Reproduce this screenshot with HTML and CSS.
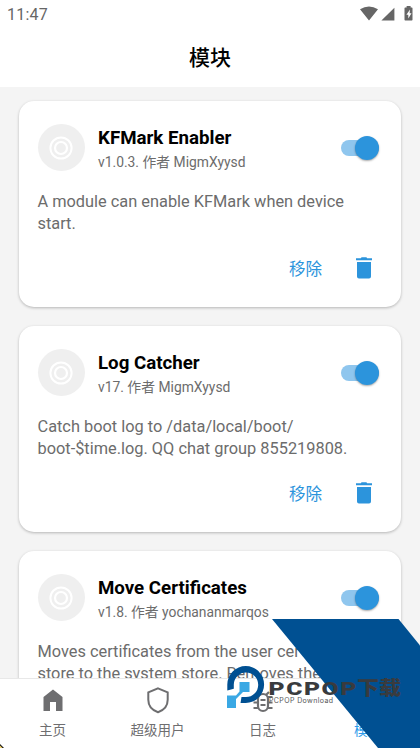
FILE: index.html
```html
<!DOCTYPE html>
<html lang="zh-CN">
<head>
<meta charset="utf-8">
<meta name="viewport" content="width=device-width">
<title>模块</title>
<link rel="stylesheet" href="styles.css">
</head>
<body>
<svg class="defs" width="0" height="0" aria-hidden="true">
  <symbol id="disc" viewBox="0 0 24 24"><g fill="none" stroke="currentColor"><circle cx="12" cy="12" r="10.600" stroke-width="2"/><circle cx="12" cy="12" r="6" stroke-width="2.200"/></g></symbol>
  <symbol id="trash" viewBox="0 0 16 22"><path d="M0 1.2h4.8L5.6.3h4.8l.8.9H16v2H0zM1 5h14v14.5a2 2 0 0 1-2 2H3a2 2 0 0 1-2-2z" fill="currentColor"/></symbol>
</svg>
<div class="screen">
  <header class="status">
    <span>11:47</span>
    <svg width="54" height="16" viewBox="0 0 54 16" fill="#666"><path d="M0 3.200Q9-2.200 18 3.200L9 14.500zM34.400 1.800v12.700H21.400zM46.600 1.500V0h4v1.500h1.200q.7 0 .7.7v11.600q0 .7-.7.7h-6.600q-.7 0-.7-.7V2.200q0-.7.7-.7z"/><path d="M50 3.500l-3.600 5.200h1.900v3.800l3.200-5.200h-1.900z" fill="#fff"/></svg>
  </header>
  <h1 class="title">模块</h1>
  <main class="list">
    <article class="card">
      <div class="head">
        <div class="avatar"><svg width="24" height="24"><use href="#disc"/></svg></div>
        <div class="info"><h2>KFMark Enabler</h2><p class="meta">v1.0.3. 作者 MigmXyysd</p></div>
        <div class="switch"></div>
      </div>
      <p class="desc">A module can enable KFMark when device<br>start.</p>
      <div class="actions"><span>移除</span><svg width="16" height="22"><use href="#trash"/></svg></div>
    </article>
    <article class="card">
      <div class="head">
        <div class="avatar"><svg width="24" height="24"><use href="#disc"/></svg></div>
        <div class="info"><h2>Log Catcher</h2><p class="meta">v17. 作者 MigmXyysd</p></div>
        <div class="switch"></div>
      </div>
      <p class="desc">Catch boot log to /data/local/boot/<br>boot-$time.log. QQ chat group 855219808.</p>
      <div class="actions"><span>移除</span><svg width="16" height="22"><use href="#trash"/></svg></div>
    </article>
    <article class="card">
      <div class="head">
        <div class="avatar"><svg width="24" height="24"><use href="#disc"/></svg></div>
        <div class="info"><h2>Move Certificates</h2><p class="meta">v1.8. 作者 yochananmarqos</p></div>
        <div class="switch"></div>
      </div>
      <p class="desc">Moves certificates from the user cer<br>store to the system store. Removes the</p>
    </article>
  </main>
  <nav class="tabs">
    <div class="tab"><svg width="26" height="28" viewBox="0 0 26 28"><path d="M3.500 10L13 2.500 22.500 10v14H16v-9h-6v9H3.500z" fill="currentColor"/></svg><span>主页</span></div>
    <div class="tab"><svg width="26" height="28" viewBox="0 0 26 28"><path d="M13 1.300l9.700 4v7.500c0 6-4 10.500-9.700 12.400C7.300 23.300 3.300 18.800 3.300 12.800V5.300z" fill="none" stroke="currentColor" stroke-width="2"/></svg><span>超级用户</span></div>
    <div class="tab"><svg width="26" height="28" viewBox="0 0 26 28" fill="none" stroke="currentColor" stroke-width="2.200"><path d="M8 12a5 5 0 0 1 10 0v7a5 5 0 0 1-10 0zM10.500 13h5M10.500 18h5M8 10H3.500M18 10h4.500M8 15.500H3.500M18 15.500h4.500M8 21H3.500M18 21h4.500M10 8L7 5M16 8l3-3"/></svg><span>日志</span></div>
    <div class="tab active"><svg width="26" height="28"></svg><span>模块</span></div>
  </nav>
  <svg class="brand" width="420" height="748" viewBox="0 0 420 748">
    <path d="M272 619H398.500L420 645.500V748H378z" fill="#005092"/>
    <path d="M227.300 690.500V684.500a18.400 18.400 0 1 1 18.400 18.400H240.500L241.500 697H246a12.200 12.200 0 1 0-12.200-12.500v4.200z" fill="#005092"/>
    <path d="M239.500 682h10v10h-6.500l-7 7v9H227V695.500h9l3.500-4z" fill="#3aa8e4"/>
    <text class="brand-name" transform="translate(268.500 694.500) scale(1.300 1)" textLength="67.500" lengthAdjust="spacing">PCPOP</text>
    <text class="brand-cn" x="357" y="694.500" textLength="44" lengthAdjust="spacingAndGlyphs">下载</text>
    <text class="brand-sub" x="269" y="703" textLength="64" lengthAdjust="spacing">PCPOP Download</text>
    <path d="M0 744v4h4z" fill="#111"/><path d="M0 745.500V748h2.500z" fill="#f5d36a"/>
  </svg>
</div>
</body>
</html>
```
FILE: styles.css
```css
* { box-sizing: border-box; margin: 0; padding: 0; }
body { background: #f4f4f4; font-family: Roboto, "Noto Sans CJK SC", sans-serif; color: #6c6c6c; }
.defs { position: absolute; }
.screen { position: relative; width: 420px; height: 748px; overflow: hidden; display: flex; flex-direction: column; }
.status { flex: none; height: 30px; background: #fff; padding: 0 6px 0 7px; display: flex; justify-content: space-between; font-size: 16px; line-height: 30px; letter-spacing: 0.2px; color: #666; }
.status svg { margin-top: 6px; }
.title { flex: none; height: 57px; background: #fff; text-align: center; font-size: 21px; line-height: 57px; font-weight: 500; color: #000; }
.list { flex: 1; min-height: 0; overflow: hidden; padding: 14px 19px 0; display: flex; flex-direction: column; gap: 19px; }
.card { flex: none; height: 206px; padding: 23px 22px 0 18.500px; background: #fff; border-radius: 15px; box-shadow: 0 1px 3px rgba(0,0,0,.26); }
.head { display: flex; height: 47px; align-items: center; }
.avatar { width: 47px; height: 47px; border-radius: 50%; background: #efefef; color: #fff; display: flex; align-items: center; justify-content: center; }
.info { margin-left: 13.500px; flex: 1; padding-top: 2px; }
.info h2 { font-size: 18.700px; line-height: 26px; font-weight: 700; color: #000; white-space: nowrap; }
.meta { font-size: 13.850px; line-height: 22px; white-space: nowrap; }
.switch { position: relative; width: 38px; height: 16px; border-radius: 8px; background: #8fc6ee; }
.switch::after { content: ""; position: absolute; right: 0; top: -4px; width: 24px; height: 24px; border-radius: 50%; background: #2c94dc; box-shadow: 0 1px 2px rgba(0,0,0,.35); }
.desc { margin-top: 20px; font-size: 16.350px; line-height: 22px; height: 44px; white-space: nowrap; }
.actions { display: flex; justify-content: flex-end; align-items: center; gap: 34px; height: 24px; margin: 21px 7px 0 0; font-size: 16.500px; line-height: 24px; font-family: "Noto Sans CJK SC", sans-serif; font-weight: 400; color: #2c94dc; }
.tabs { flex: none; height: 70.500px; background: #fff; border-top: 1px solid #e8e8e8; display: grid; grid-template-columns: repeat(4, 1fr); }
.tab { display: flex; flex-direction: column; align-items: center; padding-top: 8px; font-size: 13.500px; color: #6e6e70; }
.tab span { line-height: 20px; margin-top: 5px; }
.tab.active { color: #2c9bea; }
.brand { position: absolute; left: 0; top: 0; }
.brand-name { font: 900 19px Roboto, sans-serif; fill: #393b3e; }
.brand-cn { font: 900 19px "Noto Sans CJK SC", sans-serif; fill: #393b3e; }
.brand-sub { font: 400 7px Inter, sans-serif; fill: #555; }
```
